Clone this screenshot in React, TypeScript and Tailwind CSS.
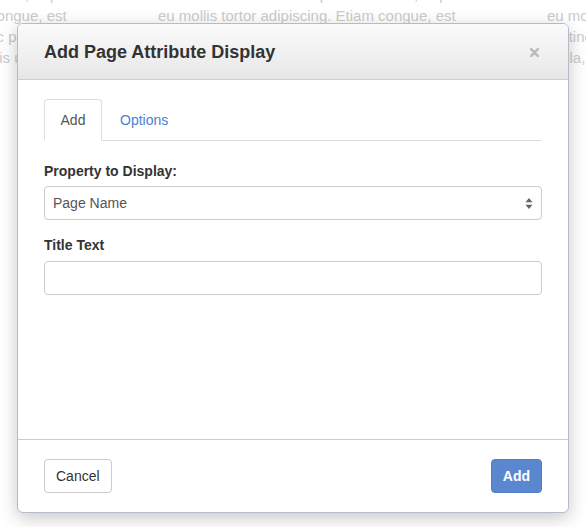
import React from 'react'

const BG_LINES = [
  'Cras mattis consectetur purus sit amet, dapibus ac',
  'eu mollis tortor adipiscing. Etiam congue, est',
  'Ac tincidunt massa vel mauris nunc pretium, at',
  'Nulla, vitae aliquet lorem sed et quis ultrices',
]

function BackgroundColumn() {
  return (
    <div className="w-[389px] shrink-0">
      {BG_LINES.map((line) => (
        <div key={line} className="whitespace-nowrap">
          {line}
        </div>
      ))}
    </div>
  )
}

export default function App() {
  return (
    <div className="relative h-[527px] w-[586px] overflow-hidden bg-white font-['Liberation_Sans',Arial,sans-serif]">
      {/* page behind the dialog */}
      <div className="-mt-[16px] -ml-[231px] flex text-[15px] leading-[21px] text-[#cbcbcb]">
        <BackgroundColumn />
        <BackgroundColumn />
        <BackgroundColumn />
      </div>

      {/* dialog */}
      <div className="absolute left-[17px] top-[23px] w-[552px] overflow-hidden rounded-[6px] border border-[#b4bcc8] bg-white shadow-[0_5px_18px_rgba(0,0,0,0.22)]">
        <div className="flex h-[56px] items-center justify-between border-b border-[#c9cdd4] bg-gradient-to-b from-[#fbfbfb] to-[#e7e7e7] pl-[26px] pr-[29px]">
          <h4 className="pt-px text-[18px] font-bold text-[#333]">Add Page Attribute Display</h4>
          <svg width="9" height="9" viewBox="0 0 9 9" className="mt-px">
            <path d="M1.2 1.2 L7.8 7.8 M7.8 1.2 L1.2 7.8" stroke="#bcbcbc" strokeWidth="2.6" strokeLinecap="round" />
          </svg>
        </div>

        <div className="h-[359px] px-[26px] pt-[19px]">
          <div className="flex border-b border-[#ddd] text-[14px]">
            <div className="-mb-px flex h-[42px] w-[58px] items-center justify-center rounded-t-[4px] border border-[#ddd] border-b-white bg-white pt-px text-[#555]">
              Add
            </div>
            <div className="flex h-[41px] items-center pl-[18px] pt-px text-[#4a80d3]">Options</div>
          </div>

          <div className="mt-[20px] text-[14px] font-bold leading-[20px] text-[#333]">Property to Display:</div>
          <div className="mt-[5px] flex h-[34px] items-center justify-between rounded-[4px] border border-[#ccc] bg-white pl-[8px] pr-[8px] text-[14px] text-[#555]">
            <span>Page Name</span>
            <svg width="8" height="13" viewBox="0 0 8 13" className="text-[#666]">
              <path d="M4 1 L7.5 5.2 H0.5 Z M4 12 L7.5 7.8 H0.5 Z" fill="currentColor" />
            </svg>
          </div>

          <div className="mt-[15px] text-[14px] font-bold leading-[20px] text-[#333]">Title Text</div>
          <div className="mt-[6px] h-[34px] rounded-[4px] border border-[#ccc] bg-white" />
        </div>

        <div className="flex items-center justify-between border-t border-[#c9cdd4] px-[26px] pb-[19px] pt-[19px]">
          <button className="h-[34px] rounded-[4px] border border-[#ccc] bg-white px-[11px] text-[14px] text-[#333]">
            Cancel
          </button>
          <button className="h-[34px] rounded-[4px] border border-[#4f7cc4] bg-[#5b87d1] px-[11px] text-[14px] font-bold text-white">
            Add
          </button>
        </div>
      </div>
    </div>
  )
}
